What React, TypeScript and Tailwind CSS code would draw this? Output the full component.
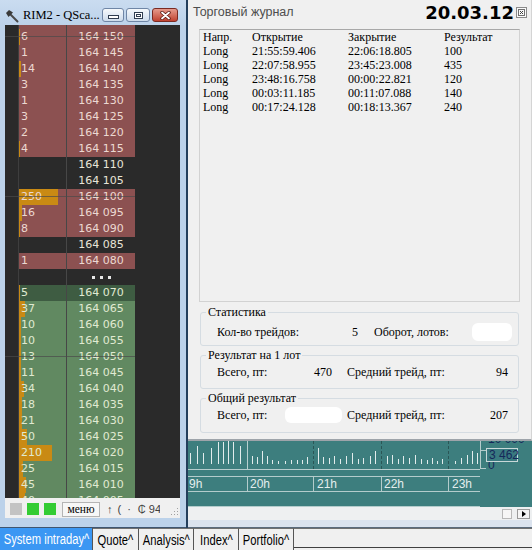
import React from 'react';

type Kind = 'red' | 'green' | 'dgreen' | 'dark' | 'dots';
type Row = { p: string; v?: number; k: Kind };

// price ladder, top row is only partly visible
const ladder: Row[] = [
  { p: '164 155', v: 3, k: 'red' },
  { p: '164 150', v: 6, k: 'red' },
  { p: '164 145', v: 1, k: 'red' },
  { p: '164 140', v: 14, k: 'red' },
  { p: '164 135', v: 3, k: 'red' },
  { p: '164 130', v: 1, k: 'red' },
  { p: '164 125', v: 3, k: 'red' },
  { p: '164 120', v: 2, k: 'red' },
  { p: '164 115', v: 4, k: 'red' },
  { p: '164 110', k: 'dark' },
  { p: '164 105', k: 'dark' },
  { p: '164 100', v: 250, k: 'red' },
  { p: '164 095', v: 16, k: 'red' },
  { p: '164 090', v: 8, k: 'red' },
  { p: '164 085', k: 'dark' },
  { p: '164 080', v: 1, k: 'red' },
  { p: '', k: 'dots' },
  { p: '164 070', v: 5, k: 'dgreen' },
  { p: '164 065', v: 37, k: 'green' },
  { p: '164 060', v: 10, k: 'green' },
  { p: '164 055', v: 10, k: 'green' },
  { p: '164 050', v: 13, k: 'green' },
  { p: '164 045', v: 11, k: 'green' },
  { p: '164 040', v: 34, k: 'green' },
  { p: '164 035', v: 18, k: 'green' },
  { p: '164 030', v: 21, k: 'green' },
  { p: '164 025', v: 50, k: 'green' },
  { p: '164 020', v: 210, k: 'green' },
  { p: '164 015', v: 25, k: 'green' },
  { p: '164 010', v: 45, k: 'green' },
  { p: '164 005', v: 40, k: 'green' },
];

const cellStyle: Record<Kind, string> = {
  red: 'bg-[#8c5151] text-[#ecd9d2]',
  green: 'bg-[#618961] text-[#e0ead2]',
  dgreen: 'bg-[#3e5c42] text-[#e0ead2]',
  dark: 'bg-[#2a2a2a] text-[#e8e4d8]',
  dots: 'bg-[#2a2a2a] text-[#e8e4d8]',
};

const trades = [
  ['Long', '21:55:59.406', '22:06:18.805', '100'],
  ['Long', '22:07:58.955', '23:45:23.008', '435'],
  ['Long', '23:48:16.758', '00:00:22.821', '120'],
  ['Long', '00:03:11.185', '00:11:07.088', '140'],
  ['Long', '00:17:24.128', '00:18:13.367', '240'],
];

// [x, height] of the volume histogram bars
const bars: [number, number][] = [
  [2, 11], [9, 18], [15, 11], [23, 16], [30, 22], [35, 22], [40, 23], [45, 22], [52, 18],
  [64, 8], [69, 7], [74, 13], [79, 8], [84, 4], [90, 3], [97, 3], [103, 4], [109, 4], [114, 4], [119, 7],
  [130, 16], [135, 7], [141, 6], [146, 8], [152, 5], [158, 8], [164, 11], [170, 5], [175, 6], [182, 8], [187, 13],
  [199, 8], [204, 9], [210, 5], [215, 8], [221, 6], [227, 9], [233, 5], [239, 4], [244, 6], [249, 3], [254, 5],
  [267, 3], [273, 6], [279, 9], [284, 13], [289, 11],
];

const tabs = [
  { t: 'System intraday^', w: 'w-[93px]', active: true },
  { t: 'Quote^', w: 'w-[46px]' },
  { t: 'Analysis^', w: 'w-[55px]' },
  { t: 'Index^', w: 'w-[45px]' },
  { t: 'Portfolio^', w: 'w-[55px]' },
];

function LadderRow({ r, first }: { r: Row; first?: boolean }) {
  const bar = r.v ? Math.round(r.v * 0.157) : 0;
  return (
    <div className={`flex h-[16px] shrink-0 leading-[16px] ${first ? '-mt-[12px]' : ''}`}>
      <div className="w-[13px] bg-[#2a2a2a]" />
      <div className="w-px bg-[#3e3e3e]" />
      <div className={`relative w-[47px] ${cellStyle[r.k]}`}>
        {bar > 0 && <div className="absolute inset-y-0 left-0 bg-[#c98a14]" style={{ width: bar }} />}
        <span className="relative pl-[2px]">{r.v}</span>
      </div>
      <div className="w-px bg-[#474747]" />
      <div className={`w-[68px] flex items-center justify-center ${cellStyle[r.k]}`}>
        {r.k === 'dots' ? (
          <div className="flex gap-[5px]">
            <div className="w-[3px] h-[3px] bg-[#e8e8e8]" />
            <div className="w-[3px] h-[3px] bg-[#e8e8e8]" />
            <div className="w-[3px] h-[3px] bg-[#e8e8e8]" />
          </div>
        ) : (
          r.p
        )}
      </div>
      <div className="flex-1 bg-[#2a2a2a]" />
    </div>
  );
}

function LeftWindow() {
  return (
    <div className="w-[188px] shrink-0 flex flex-col bg-[#bcd2ea] border-r-2 border-[#243f5c]">
      {/* title bar */}
      <div className="h-[25px] shrink-0 flex items-start bg-linear-to-b from-[#cadcf0] to-[#bcd2ea]">
        <svg width="14" height="14" viewBox="0 0 14 14" className="ml-[5px] mt-[9px]">
          <path d="M5.5 5.5 L12.5 12.5" stroke="#4a4a4a" strokeWidth="2" strokeLinecap="round" />
          <path d="M1 4 L4 1 L8 3.5 L3.5 8 Z" fill="#3a3a3a" />
        </svg>
        <span className="ml-[4px] mt-[7px] leading-[16px] text-[12.5px] text-black font-['Liberation_Serif',serif]">
          RIM2 - QSca...
        </span>
        <div className="ml-auto mr-[8px] mt-[8px] flex gap-[2px]">
          <div className="w-[22px] h-[14px] rounded-[3px] border border-[#6f86a6] bg-linear-to-b from-[#f6f9fc] to-[#cddbeb] flex items-end justify-center pb-[2px]">
            <div className="w-[11px] h-[4px] bg-white border border-[#2f3d50]" />
          </div>
          <div className="w-[24px] h-[14px] rounded-[3px] border border-[#6f86a6] bg-linear-to-b from-[#f6f9fc] to-[#cddbeb] flex items-center justify-center">
            <div className="w-[9px] h-[7px] border border-[#2f3d50] bg-white flex items-center justify-center">
              <div className="w-[5px] h-[3px] border border-[#2f3d50]" />
            </div>
          </div>
          <div className="w-[26px] h-[14px] rounded-[3px] border border-[#7a2a22] bg-linear-to-b from-[#e59a8c] to-[#c0402f] flex items-center justify-center">
            <svg width="11" height="9" viewBox="0 0 11 9">
              <path d="M2 1.5 L9 7.5 M9 1.5 L2 7.5" stroke="#5a1a14" strokeWidth="3.4" strokeLinecap="round" />
              <path d="M2 1.5 L9 7.5 M9 1.5 L2 7.5" stroke="#ffffff" strokeWidth="1.8" strokeLinecap="round" />
            </svg>
          </div>
        </div>
      </div>

      <div className="flex-1 flex flex-col pl-[5px] pr-[6px]">
        {/* ladder */}
        <div className="relative h-[473px] overflow-hidden flex flex-col text-[11px] font-['DejaVu_Sans',sans-serif]">
          {ladder.map((r, i) => (
            <LadderRow key={i} r={r} first={i === 0} />
          ))}
          <div className="absolute left-0 w-[130px] top-[11px] h-px bg-[#4a4a4a]/70" />
          <div className="absolute left-0 w-[130px] top-[171px] h-px bg-[#4a4a4a]/70" />
          <div className="absolute left-0 w-[130px] top-[331px] h-px bg-[#4a4a4a]/70" />
        </div>

        {/* toolbar */}
        <div className="h-[20px] shrink-0 bg-[#f0f0f0] flex items-center pt-[2px]">
          <div className="ml-[5px] w-[12px] h-[12px] bg-[#c3c3c3]" />
          <div className="ml-[5px] w-[12px] h-[12px] bg-[#33cc33]" />
          <div className="ml-[5px] w-[12px] h-[12px] bg-[#33cc33]" />
          <div className="ml-[6px] w-[38px] h-[15px] border border-[#b4b4b4] bg-[#f7f7f7] flex items-center justify-center text-[11.5px] leading-[13px] text-black font-['Liberation_Serif',serif]">
            меню
          </div>
          <div className="ml-[7px] w-[53px] overflow-hidden whitespace-nowrap flex text-[11px] leading-[13px] text-[#404040] font-['Liberation_Sans',Arial,sans-serif]">
            <span>↑</span>
            <span className="ml-[5px]">(</span>
            <span className="ml-[6px]">·</span>
            <span className="ml-[7px]">₵</span>
            <span className="ml-[3px]">94</span>
          </div>
          <svg width="8" height="8" viewBox="0 0 8 8" className="ml-auto mr-[1px] mt-[6px]">
            <rect x="6" y="0" width="1" height="1" fill="#a0a0a0" />
            <rect x="3" y="3" width="1" height="1" fill="#a0a0a0" />
            <rect x="6" y="3" width="1" height="1" fill="#a0a0a0" />
            <rect x="0" y="6" width="1" height="1" fill="#a0a0a0" />
            <rect x="3" y="6" width="1" height="1" fill="#a0a0a0" />
            <rect x="6" y="6" width="1" height="1" fill="#a0a0a0" />
          </svg>
        </div>
        <div className="flex-1" />
      </div>
      <div className="h-px shrink-0 bg-[#3e5570]" />
    </div>
  );
}

function JournalWindow() {
  return (
    <div className="h-[441px] shrink-0 bg-[#f0f0f0] border-r border-[#d4d4d4] border-b-2 border-b-[#9ea4aa] flex flex-col text-black font-['Liberation_Serif','Times_New_Roman',serif] text-[12px]">
      <div className="h-[29px] shrink-0 flex items-start">
        <span className="ml-[5px] mt-[5px] leading-[14px] text-[12.5px] text-[#4d4d4d] font-['Liberation_Sans',Arial,sans-serif]">
          Торговый журнал
        </span>
        <span className="ml-auto mt-[2px] text-[18px] leading-[22px] font-bold text-black font-['DejaVu_Sans',sans-serif]">
          20.03.12
        </span>
        <div className="ml-[2px] mr-[4px] mt-[7px] w-[11px] h-[11px] border border-[#8a8a8a] bg-[#fafafa] flex items-center justify-center">
          <svg width="7" height="7" viewBox="0 0 7 7">
            <rect x="0.5" y="0.5" width="6" height="6" fill="none" stroke="#707070" />
            <path d="M2 2 L5 5 M5 2 L2 5" stroke="#404040" />
          </svg>
        </div>
      </div>

      {/* trades table */}
      <div className="ml-[11px] w-[321px] h-[273px] shrink-0 border border-[#d2d2d2] border-t-[#a8a8a8] pl-[3px] leading-[14px]">
        <div className="grid grid-cols-[49px_96px_96px_1fr]">
          <div>Напр.</div>
          <div>Открытие</div>
          <div>Закрытие</div>
          <div>Результат</div>
          {trades.map((t, i) => (
            <React.Fragment key={i}>
              <div>{t[0]}</div>
              <div>{t[1]}</div>
              <div>{t[2]}</div>
              <div>{t[3]}</div>
            </React.Fragment>
          ))}
        </div>
      </div>

      <fieldset className="ml-[12px] mt-[3px] w-[319px] h-[41px] shrink-0 border border-[#d5dce2] rounded-[3px]">
        <legend className="ml-[5px] px-[2px] leading-[14px]">Статистика</legend>
        <div className="mt-[6px] pl-[16px] h-[14px] leading-[14px] flex items-center">
          <div className="w-[141px] flex justify-between">
            <span>Кол-во трейдов:</span>
            <span>5</span>
          </div>
          <span className="ml-[16px]">Оборот, лотов:</span>
          <div className="ml-auto mr-[6px] w-[40px] h-[18px] rounded-[6px] bg-white" />
        </div>
      </fieldset>

      <fieldset className="ml-[12px] mt-[2px] w-[319px] h-[41px] shrink-0 border border-[#d5dce2] rounded-[3px]">
        <legend className="ml-[5px] px-[2px] leading-[14px]">Результат на 1 лот</legend>
        <div className="mt-[3px] pl-[16px] pr-[10px] h-[14px] leading-[14px] flex items-center">
          <div className="w-[115px] flex justify-between">
            <span>Всего, пт:</span>
            <span>470</span>
          </div>
          <span className="ml-[15px]">Средний трейд, пт:</span>
          <span className="ml-auto">94</span>
        </div>
      </fieldset>

      <fieldset className="ml-[12px] mt-[2px] w-[319px] h-[42px] shrink-0 border border-[#d5dce2] rounded-[3px]">
        <legend className="ml-[5px] px-[2px] leading-[14px]">Общий результат</legend>
        <div className="mt-[3px] pl-[16px] pr-[10px] h-[14px] leading-[14px] flex items-center">
          <span className="w-[68px]">Всего, пт:</span>
          <div className="w-[57px] h-[16px] rounded-[6px] bg-white" />
          <span className="ml-[5px]">Средний трейд, пт:</span>
          <span className="ml-auto">207</span>
        </div>
      </fieldset>
    </div>
  );
}

function Chart() {
  return (
    <div className="flex-1 flex flex-col">
      <svg width="344" height="66" className="block shrink-0 overflow-hidden bg-[#3d7e7e]">
        {bars.map(([x, h], i) => (
          <line key={i} x1={x + 0.5} x2={x + 0.5} y1={23} y2={23 - h} stroke="#e2ecec" />
        ))}
        <line x1="59.5" x2="59.5" y1="0" y2="28" stroke="#b8d0d0" />
        {[125, 193, 260].map((x) => (
          <line key={x} x1={x + 0.5} x2={x + 0.5} y1="0" y2="28" stroke="#2a5656" strokeDasharray="3 2" />
        ))}
        <line x1="0" x2="292" y1="28.5" y2="28.5" stroke="#b4cccc" />
        <line x1="0" x2="292" y1="35.5" y2="35.5" stroke="#b4cccc" />
        <line x1="0" x2="292" y1="50.5" y2="50.5" stroke="#b4cccc" />
        <line x1="0" x2="292" y1="65.5" y2="65.5" stroke="#b4cccc" />
        {[59, 125, 193, 260].map((x) => (
          <line key={x} x1={x + 0.5} x2={x + 0.5} y1="35" y2="50" stroke="#b4cccc" />
        ))}
        <g fill="#e4eeee" fontSize="12" fontFamily="Liberation Sans, Arial, sans-serif">
          <text x="1" y="47">9h</text>
          <text x="62" y="47">20h</text>
          <text x="129" y="47">21h</text>
          <text x="196" y="47">22h</text>
          <text x="264" y="47">23h</text>
        </g>
        <line x1="292.5" x2="292.5" y1="0" y2="28" stroke="#b4cccc" />
        <line x1="292" x2="298" y1="9.5" y2="9.5" stroke="#b4cccc" />
        <line x1="292" x2="298" y1="27.5" y2="27.5" stroke="#b4cccc" />
        <g fill="#15285a" fontSize="12" fontFamily="Liberation Sans, Arial, sans-serif">
          <text x="300" y="2">10 000</text>
          <text x="300" y="28">0</text>
        </g>
        <rect x="298.5" y="7.5" width="31" height="13" fill="#3a7a80" stroke="#c8d8d8" />
        <text x="301" y="18" fill="#15285a" fontSize="12" fontFamily="Liberation Sans, Arial, sans-serif">
          3 462
        </text>
      </svg>
      <div className="h-[13px] shrink-0 bg-[#eef0f1] flex items-center justify-end">
        <div className="w-[10px] h-[10px] border border-[#b8b8b8] bg-[#f6f6f6]" />
        <div className="ml-[5px] mr-[2px] w-[13px] h-[10px] border border-[#9a9a9a] bg-[#f4f4f4] flex items-center justify-center">
          <svg width="4" height="6" viewBox="0 0 4 6">
            <path d="M0 0 L4 3 L0 6 Z" fill="#000" />
          </svg>
        </div>
      </div>
      <div className="h-[7px] shrink-0 bg-[#dbe3ee]" />
      <div className="h-px shrink-0 bg-[#5b6b7c]" />
    </div>
  );
}

function Tabs() {
  return (
    <div className="h-[22px] shrink-0 flex items-start bg-[#f0f0f0] font-['Liberation_Sans',Arial,sans-serif]">
      {tabs.map((t) => (
        <div
          key={t.t}
          className={`${t.w} h-[22px] shrink-0 flex items-center justify-center overflow-visible border-r border-[#555] ${
            t.active ? 'bg-[#3b97f3] text-white' : 'border-t border-t-[#707070] text-black'
          }`}
        >
          <span className="inline-block whitespace-nowrap text-[14px] leading-[16px] scale-x-[0.8]">{t.t}</span>
        </div>
      ))}
      <div className="flex-1 h-[20px] border-t border-[#707070] border-b border-b-[#404040]" />
    </div>
  );
}

export default function App() {
  return (
    <div className="w-[532px] h-[550px] overflow-hidden bg-[#f0f0f0] flex flex-col font-['Liberation_Sans',Arial,sans-serif]">
      <div className="flex h-[528px] shrink-0">
        <LeftWindow />
        <div className="w-[344px] shrink-0 flex flex-col">
          <JournalWindow />
          <Chart />
        </div>
      </div>
      <Tabs />
    </div>
  );
}
